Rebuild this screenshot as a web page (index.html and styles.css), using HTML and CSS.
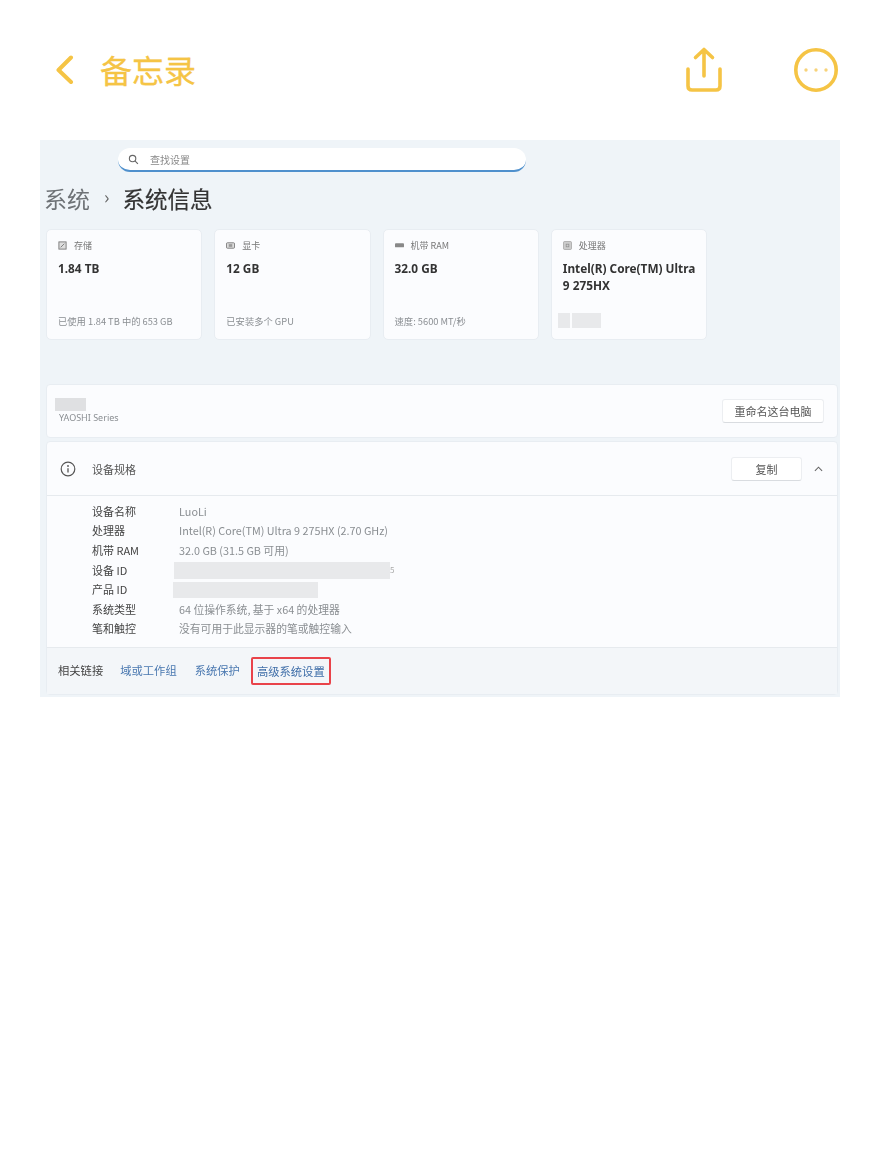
FILE: index.html
```html
<!DOCTYPE html>
<html lang="zh-CN">
<head>
<meta charset="utf-8">
<title>备忘录</title>
<link rel="stylesheet" href="styles.css">
</head>
<body>
<header class="nav">
  <div class="nav-left">
    <svg class="icon-back" viewBox="0 0 20 30"><path d="M16 2.500 L3.500 15 L16 27" fill="none" stroke="#f5c445" stroke-width="4" stroke-linecap="round" stroke-linejoin="round"/></svg>
    <span class="nav-title">备忘录</span>
  </div>
  <div class="nav-right">
    <svg class="icon-share" viewBox="0 0 38 46"><path d="M3 22 V39 Q3 43 7 43 H31 Q35 43 35 39 V22 M19 29 V3 M10.500 10.500 L19 2.500 L27.500 10.500" fill="none" stroke="#f5c445" stroke-width="3.600" stroke-linecap="round" stroke-linejoin="round"/></svg>
    <svg class="icon-more" viewBox="0 0 44 44"><circle cx="22" cy="22" r="20.200" fill="none" stroke="#f5c445" stroke-width="3.600"/><circle cx="12" cy="22" r="1.700" fill="#f7d37a"/><circle cx="22" cy="22" r="1.700" fill="#f7d37a"/><circle cx="32" cy="22" r="1.700" fill="#f7d37a"/></svg>
  </div>
</header>

<main class="shot">
  <div class="search">
    <svg class="search-icon" viewBox="0 0 12 12"><circle cx="5" cy="5" r="3.500" fill="none" stroke="#666" stroke-width="1.200"/><path d="M7.600 7.600 L10.800 10.800" stroke="#666" stroke-width="1.200"/></svg>
    <span class="search-text">查找设置</span>
  </div>
  <div class="crumbs"><span class="crumb-parent">系统</span><span class="crumb-sep">›</span><span class="crumb-current">系统信息</span></div>

  <section class="cards">
    <div class="card">
      <div class="card-head"><svg class="card-icon" viewBox="0 0 10 10"><rect x="1" y="1" width="8" height="8" fill="#ddd" stroke="#777"/><path d="M3 7 L7 3" stroke="#777"/></svg><span>存储</span></div>
      <div class="card-value">1.84 TB</div>
      <div class="card-foot">已使用 1.84 TB 中的 653 GB</div>
    </div>
    <div class="card">
      <div class="card-head"><svg class="card-icon" viewBox="0 0 10 10"><rect x="0.500" y="2" width="9" height="6" rx="1" fill="#ddd" stroke="#777"/><rect x="3" y="3.500" width="4" height="3" fill="#999"/></svg><span>显卡</span></div>
      <div class="card-value">12 GB</div>
      <div class="card-foot">已安装多个 GPU</div>
    </div>
    <div class="card">
      <div class="card-head"><svg class="card-icon" viewBox="0 0 10 10"><rect x="0" y="2.500" width="10" height="4.500" rx="1" fill="#888"/></svg><span>机带 RAM</span></div>
      <div class="card-value">32.0 GB</div>
      <div class="card-foot">速度: 5600 MT/秒</div>
    </div>
    <div class="card">
      <div class="card-head"><svg class="card-icon" viewBox="0 0 10 10"><rect x="0.500" y="0.500" width="9" height="9" rx="1.500" fill="#ccc" stroke="#aaa"/><rect x="3.500" y="3.500" width="3" height="3" fill="none" stroke="#888" stroke-width="0.700"/></svg><span>处理器</span></div>
      <div class="card-value">Intel(R) Core(TM) Ultra 9 275HX</div>
      <div class="card-mask"><i class="mask mask-a"></i><i class="mask mask-b"></i></div>
    </div>
  </section>

  <section class="panel panel-name">
    <div>
      <i class="mask mask-name"></i>
      <div class="series">YAOSHI Series</div>
    </div>
    <span class="btn btn-rename">重命名这台电脑</span>
  </section>

  <section class="panel panel-spec">
    <div class="spec-head">
      <svg class="info-icon" viewBox="0 0 16 16"><circle cx="8" cy="8" r="6.800" fill="none" stroke="#555" stroke-width="1.200"/><circle cx="8" cy="5" r="0.900" fill="#555"/><path d="M8 7.200 V11.500" stroke="#555" stroke-width="1.300"/></svg>
      <span class="spec-title">设备规格</span>
      <span class="btn btn-copy">复制</span>
      <svg class="chev" viewBox="0 0 10 6"><path d="M1 5 L5 1 L9 5" fill="none" stroke="#666" stroke-width="1.200"/></svg>
    </div>
    <dl class="spec-list">
      <dt>设备名称</dt><dd>LuoLi</dd>
      <dt>处理器</dt><dd>Intel(R) Core(TM) Ultra 9 275HX (2.70 GHz)</dd>
      <dt>机带 RAM</dt><dd>32.0 GB (31.5 GB 可用)</dd>
      <dt>设备 ID</dt><dd class="masked"><i class="mask mask-id"></i><span class="id-tail">5</span></dd>
      <dt>产品 ID</dt><dd><i class="mask mask-prod"></i></dd>
      <dt>系统类型</dt><dd>64 位操作系统, 基于 x64 的处理器</dd>
      <dt>笔和触控</dt><dd>没有可用于此显示器的笔或触控输入</dd>
    </dl>
    <div class="links">
      <span class="links-label">相关链接</span>
      <a class="link">域或工作组</a>
      <a class="link">系统保护</a>
      <a class="link link-hot">高级系统设置</a>
    </div>
  </section>
</main>
</body>
</html>
```

FILE: styles.css
```css
* { box-sizing: border-box; }
html, body { margin: 0; background: #fff; }
body { width: 880px; height: 1172px; overflow: hidden; font-family: "Noto Sans CJK SC", "Noto Sans", sans-serif; }

.nav { height: 140px; padding: 47px 42px 0 55px; display: flex; justify-content: space-between; align-items: flex-start; }
.nav-left { display: flex; align-items: center; height: 46px; }
.icon-back { width: 20px; height: 30px; margin-right: 25px; }
.nav-title { font-size: 32px; line-height: 44px; color: #f5c445; padding-bottom: 2px; -webkit-text-stroke: 0.300px #f5c445; }
.nav-right { display: flex; align-items: flex-start; gap: 71px; }
.icon-share { width: 38px; height: 46px; }
.icon-more { width: 44px; height: 44px; margin-top: 1px; }

.shot { width: 800px; height: 557px; margin-left: 40px; background: #eff4f8; padding: 0 2px 0 6px; filter: blur(0.7px); overflow: hidden; }

.search { margin: 8px 0 0 72px; width: 408px; height: 24px; background: #fff; border-radius: 12px; border-bottom: 2px solid #4f90cd; display: flex; align-items: center; padding-left: 10px; }
.search-icon { width: 11px; height: 11px; }
.search-text { margin-left: 11px; font-size: 10px; color: #888; }

.crumbs { height: 57px; margin-left: -2px; padding-bottom: 6px; display: flex; align-items: center; }
.crumb-parent { color: #6e7276; font-size: 23px; }
.crumb-sep { color: #666; font-size: 18px; margin: 0 13px 3px 14px; }
.crumb-current { color: #333; font-size: 22.500px; -webkit-text-stroke: 0.200px #333; }

.cards { display: flex; gap: 11.900px; height: 111px; }
.card { width: 156.400px; height: 111px; background: #fbfcfe; border: 1px solid #e8edf2; border-radius: 5px; padding: 9px 6px 0 11px; display: flex; flex-direction: column; }
.card-head { display: flex; align-items: center; height: 12px; font-size: 9px; color: #777; }
.card-icon { width: 9px; height: 9px; margin-right: 7px; }
.card-value { margin-top: 9px; font-size: 11.800px; line-height: 17px; font-weight: 700; color: #333; font-family: "Noto Sans", "Noto Sans CJK SC", sans-serif; }
.card-foot { margin-top: auto; margin-bottom: 12px; font-size: 9.300px; line-height: 12px; color: #8a8e92; white-space: nowrap; }
.card-mask { margin: auto 0 11px -5px; display: flex; gap: 2px; }

.mask { display: block; background: #e8e9eb; }
.mask-a { width: 12px; height: 15px; }
.mask-b { width: 29px; height: 15px; }
.mask-name { width: 31px; height: 13px; background: #dfe0e2; margin-left: 8px; }
.mask-id { width: 216px; height: 17px; margin: 1px 0 0 -5px; }
.mask-prod { width: 145px; height: 16px; margin: 1px 0 0 -6px; }
.masked { display: flex; align-items: center; }
.id-tail { font-size: 8px; color: #aaa; }

.panel { background: #fbfcfe; border: 1px solid #e8edf2; border-radius: 4px; }
.panel-name { margin-top: 44px; height: 54px; display: flex; justify-content: space-between; align-items: center; padding: 0 13px 0 0; }
.series { margin: 1px 0 0 12px; font-size: 9px; line-height: 12px; color: #8a8e92; font-family: "Noto Sans", sans-serif; }
.btn { background: #fff; border: 1px solid #eceef1; border-bottom-color: #d9dce0; border-radius: 3px; font-size: 11px; color: #555; display: flex; align-items: center; justify-content: center; }
.btn-rename { width: 102px; height: 24px; }
.btn-copy { width: 71px; height: 24px; margin-left: auto; }

.panel-spec { margin-top: 3px; height: 254px; display: flex; flex-direction: column; }
.spec-head { height: 54px; flex: none; display: flex; align-items: center; padding: 0 14px 0 13px; border-bottom: 1px solid #e6eaee; }
.info-icon { width: 16px; height: 16px; }
.spec-title { margin-left: 16px; font-size: 11px; color: #555; }
.chev { width: 9px; height: 6px; margin-left: 12px; }

.spec-list { flex: 1; margin: 0; padding: 5px 0 0 45px; display: grid; grid-template-columns: 87px 1fr; grid-auto-rows: 19.600px; align-items: center; font-size: 11px; }
.spec-list dt { color: #444; white-space: nowrap; }
.spec-list dd { margin: 0; color: #8a8e92; font-size: 10.800px; white-space: nowrap; }

.links { height: 47px; flex: none; display: flex; align-items: center; padding: 0 0 2px 11px; background: #f3f6f9; border-top: 1px solid #e6eaee; font-size: 11.300px; }
.links-label { color: #444; margin-right: 17px; }
.link { color: #4a78b0; margin-right: 18px; }
.link-hot { margin: 2px 0 0 -7px; padding: 0 4px; height: 28px; display: flex; align-items: center; border: 2px solid #e9434a; border-radius: 2px; color: #3f6ea8; }
```
